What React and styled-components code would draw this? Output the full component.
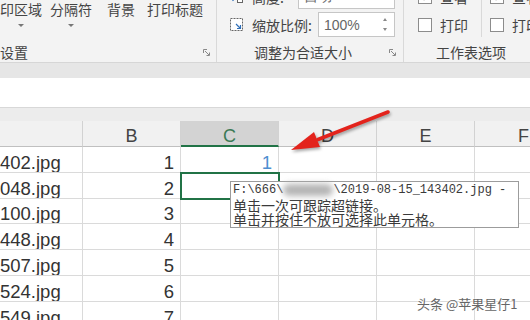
import React from 'react'
import styled, { createGlobalStyle, css } from 'styled-components'

const GlobalStyle = createGlobalStyle`
  *{
    margin: 0;
    padding: 0;
    box-sizing: border-box;
  }
  body{
    margin: 0;
    background: #fff;
    overflow: hidden;
    font-family: "Noto Sans CJK SC", "Noto Sans", sans-serif;
  }
`

const Page = styled.div`
  position: relative;
  width: 530px;
  height: 320px;
  overflow: hidden;
  background: #fff;
`

/* ---------- ribbon ---------- */

const Ribbon = styled.div`
  display: flex;
  height: 63px;
  background: #f3f3f3;
  border-bottom: 1px solid #d6d6d6;
  color: #444;
  font-size: 14px;
  overflow: hidden;
`

const Group = styled.div`
  display: flex;
  flex-direction: column;
  flex: 0 0 ${p => p.$w}px;
  border-right: ${p => (p.$last ? 'none' : '1px solid #d9d9d9')};
`

const GroupBody = styled.div`
  flex: 1;
  display: flex;
  min-height: 0;
`

const GroupFoot = styled.div`
  height: 18px;
  display: flex;
  align-items: center;
  padding: 0 ${p => p.$pr || 0}px 2px 0;
  line-height: 16px;
`

const FootLabel = styled.span`
  flex: 1;
  text-align: ${p => p.$align || 'center'};
  white-space: nowrap;
`

const RibbonButton = styled.div`
  display: flex;
  flex-direction: column;
  align-items: center;
  width: ${p => p.$w}px;
  margin-left: ${p => p.$ml || 0}px;
  line-height: 18px;
  white-space: nowrap;
`

const Caret = styled.span`
  width: 0;
  height: 0;
  border-left: 3px solid transparent;
  border-right: 3px solid transparent;
  border-top: 3px solid #777;
  margin-top: 6px;
`

const SizeRows = styled.div`
  flex: 1;
  display: flex;
  flex-direction: column;
  gap: 3px;
  margin-top: -16px;
  padding: 0 8px 0 13px;
`

const SizeRow = styled.div`
  display: flex;
  align-items: center;
  height: 25px;
  white-space: nowrap;
  svg{
    flex: none;
    margin-right: 8px;
  }
`

const Field = styled.div`
  margin-left: auto;
  width: ${p => p.$w}px;
  height: 25px;
  display: flex;
  align-items: center;
  padding: 0 7px 0 5px;
  background: #fff;
  border: 1px solid #c6c6c6;
  color: #666;
  font-family: "Liberation Sans", Arial, sans-serif;
  font-size: 14px;
`

const Spinner = styled.div`
  margin-left: auto;
  display: flex;
  flex-direction: column;
  gap: 7px;
  span{
    width: 0;
    height: 0;
    border-left: 2.5px solid transparent;
    border-right: 2.5px solid transparent;
  }
  span:first-child{ border-bottom: 3px solid #888; }
  span:last-child{ border-top: 3px solid #888; }
`

const OptionCol = styled.div`
  display: flex;
  flex-direction: column;
  gap: 3px;
  margin-top: -16px;
  width: ${p => p.$w}px;
  padding-left: ${p => p.$pl}px;
  border-right: ${p => (p.$sep ? '1px solid #d9d9d9' : 'none')};
  align-self: flex-start;
`

const OptionRow = styled.div`
  display: flex;
  align-items: center;
  gap: 8px;
  height: 25px;
  white-space: nowrap;
`

const Box = styled.span`
  flex: none;
  width: 14px;
  height: 14px;
  background: #fff;
  border: 1px solid #8c8c8c;
  display: flex;
  align-items: center;
  justify-content: center;
`

/* ---------- bars ---------- */

const Band = styled.div`
  height: ${p => p.$h}px;
  background: ${p => p.$bg};
  border-bottom: ${p => (p.$line ? `1px solid ${p.$line}` : 'none')};
`

/* ---------- sheet ---------- */

const Sheet = styled.div`
  display: grid;
  grid-template-columns: 83px repeat(5, 98px);
  grid-template-rows: 26px;
  grid-auto-rows: 25.8px;
  width: 573px;
  font-family: "Liberation Sans", Arial, sans-serif;
`

const HeadCell = styled.div`
  display: flex;
  align-items: center;
  justify-content: center;
  padding-top: 6px;
  background: ${p => (p.$active ? '#d3d3d3' : '#f1f1f1')};
  border-right: 1px solid #d2d2d2;
  border-bottom: ${p => (p.$active ? '2px solid #217346' : '1px solid #c0c0c0')};
  color: ${p => (p.$active ? '#3b7a55' : '#444')};
  font-size: 18px;
`

const Cell = styled.div`
  display: flex;
  align-items: flex-end;
  justify-content: ${p => (p.$right ? 'flex-end' : 'flex-start')};
  padding: 0 6px 0 0;
  border-right: 1px solid #dadada;
  border-bottom: 1px solid #dadada;
  font-size: 18.5px;
  line-height: 18px;
  color: ${p => (p.$link ? '#4e8fd0' : '#333')};
  white-space: nowrap;
  overflow: hidden;
  ${p =>
    p.$selected &&
    css`
      outline: 2px solid #217346;
      outline-offset: -1px;
      position: relative;
      z-index: 1;
      overflow: visible;
    `}
`

/* ---------- overlays ---------- */

const Tip = styled.div`
  position: absolute;
  left: 230px;
  top: 181px;
  width: 289px;
  height: 47px;
  padding: 1px 0 0 2px;
  background: #fff;
  border: 1px solid #9c9c9c;
  color: #3a3a3a;
  line-height: 14.5px;
  z-index: 3;
`

const TipPath = styled.div`
  display: flex;
  align-items: center;
  font-family: "Liberation Mono", monospace;
  font-size: 12px;
  white-space: nowrap;
`

const Smudge = styled.span`
  display: inline-block;
  width: 50px;
  height: 12px;
  border-radius: 6px;
  background: #b4b4b4;
  filter: blur(3px);
`

const TipLine = styled.div`
  font-size: 14px;
  white-space: nowrap;
`

const Arrow = styled.svg`
  position: absolute;
  left: 285px;
  top: 104px;
  z-index: 4;
  filter: drop-shadow(1px 2px 1.5px rgba(0, 0, 0, 0.35));
`

const Watermark = styled.div`
  position: absolute;
  left: 417px;
  top: 294px;
  font-size: 13px;
  color: #666;
  white-space: nowrap;
  text-shadow: 0 0 2px #fff, 0 0 2px #fff;
  z-index: 5;
`

const Launcher = () => (
  <svg width="7" height="7" viewBox="0 0 7 7" fill="none" stroke="#888" strokeWidth="1">
    <path d="M0.5 4V0.5H4" />
    <path d="M2 2l4 4M3.5 6.5h3v-3" />
  </svg>
)

const HeightIcon = () => (
  <svg width="14" height="14" viewBox="0 0 14 14">
    <path d="M3 3v6M0.5 7L3 10l2.5-3" stroke="#2f6fb8" strokeWidth="1.6" fill="none" />
    <rect x="7.5" y="1.5" width="5" height="11" fill="#fff" stroke="#666" />
  </svg>
)

const ScaleIcon = () => (
  <svg width="14" height="14" viewBox="0 0 14 14">
    <rect x="0.5" y="0.5" width="12" height="12" fill="#fff" stroke="#666" strokeDasharray="2 1" />
    <path d="M6 6l4.5 4.5M7 10.5h3.5V7" stroke="#2f6fb8" strokeWidth="1.2" fill="none" />
  </svg>
)

const Check = ({ on }) => (
  <Box>
    {on && (
      <svg width="10" height="10" viewBox="0 0 10 10">
        <path d="M1.5 5l2.5 2.5L8.5 2" stroke="#333" strokeWidth="1.3" fill="none" />
      </svg>
    )}
  </Box>
)

const files = ['402.jpg', '048.jpg', '100.jpg', '448.jpg', '507.jpg', '524.jpg', '549.jpg']
const cols = ['', 'B', 'C', 'D', 'E', 'F']

const App = () => {
  return (
    <Page>
      <GlobalStyle />
      <Ribbon>
        <Group $w={217}>
          <GroupBody>
            <RibbonButton $w={42}>
              印区域
              <Caret />
            </RibbonButton>
            <RibbonButton $w={42} $ml={8}>
              分隔符
              <Caret />
            </RibbonButton>
            <RibbonButton $w={28} $ml={15}>背景</RibbonButton>
            <RibbonButton $w={56} $ml={12}>打印标题</RibbonButton>
          </GroupBody>
          <GroupFoot $pr={6}>
            <FootLabel $align="left">设置</FootLabel>
            <Launcher />
          </GroupFoot>
        </Group>

        <Group $w={187}>
          <GroupBody>
            <SizeRows>
              <SizeRow>
                <HeightIcon />
                高度:
                <Field $w={97}>自动</Field>
              </SizeRow>
              <SizeRow>
                <ScaleIcon />
                缩放比例:
                <Field $w={77}>
                  100%
                  <Spinner>
                    <span />
                    <span />
                  </Spinner>
                </Field>
              </SizeRow>
            </SizeRows>
          </GroupBody>
          <GroupFoot $pr={7}>
            <FootLabel>调整为合适大小</FootLabel>
            <Launcher />
          </GroupFoot>
        </Group>

        <Group $w={134} $last>
          <GroupBody>
            <OptionCol $w={78} $pl={14} $sep>
              <OptionRow>
                <Check on />
                查看
              </OptionRow>
              <OptionRow>
                <Check />
                打印
              </OptionRow>
            </OptionCol>
            <OptionCol $w={56} $pl={8}>
              <OptionRow>
                <Check on />
                查看
              </OptionRow>
              <OptionRow>
                <Check />
                打印
              </OptionRow>
            </OptionCol>
          </GroupBody>
          <GroupFoot>
            <FootLabel>工作表选项</FootLabel>
          </GroupFoot>
        </Group>
      </Ribbon>

      <Band $h={15} $bg="#e6e6e6" />
      <Band $h={30} $bg="#fff" $line="#d8d8d8" />
      <Band $h={13} $bg="#ececec" />

      <Sheet>
        {cols.map(c => (
          <HeadCell key={c || 'A'} $active={c === 'C'}>
            {c}
          </HeadCell>
        ))}
        {files.map((f, i) => (
          <React.Fragment key={f}>
            <Cell>{f}</Cell>
            <Cell $right>{i + 1}</Cell>
            <Cell $right $link={i === 0} $selected={i === 1}>
              {i === 0 ? '1' : ''}
            </Cell>
            <Cell />
            <Cell />
            <Cell />
          </React.Fragment>
        ))}
      </Sheet>

      <Tip>
        <TipPath>
          {'F:\\666\\'}
          <Smudge />
          {'\\2019-08-15_143402.jpg -'}
        </TipPath>
        <TipLine>单击一次可跟踪超链接。</TipLine>
        <TipLine>单击并按住不放可选择此单元格。</TipLine>
      </Tip>

      <Arrow width="110" height="54" viewBox="0 0 110 54">
        <path d="M103 8L33 35.5" stroke="#e3231c" strokeWidth="3.5" strokeLinecap="round" />
        <polygon points="6,46 29,28 35,43" fill="#e3231c" />
      </Arrow>

      <Watermark>头条 @苹果星仔1</Watermark>
    </Page>
  )
}

export default App
